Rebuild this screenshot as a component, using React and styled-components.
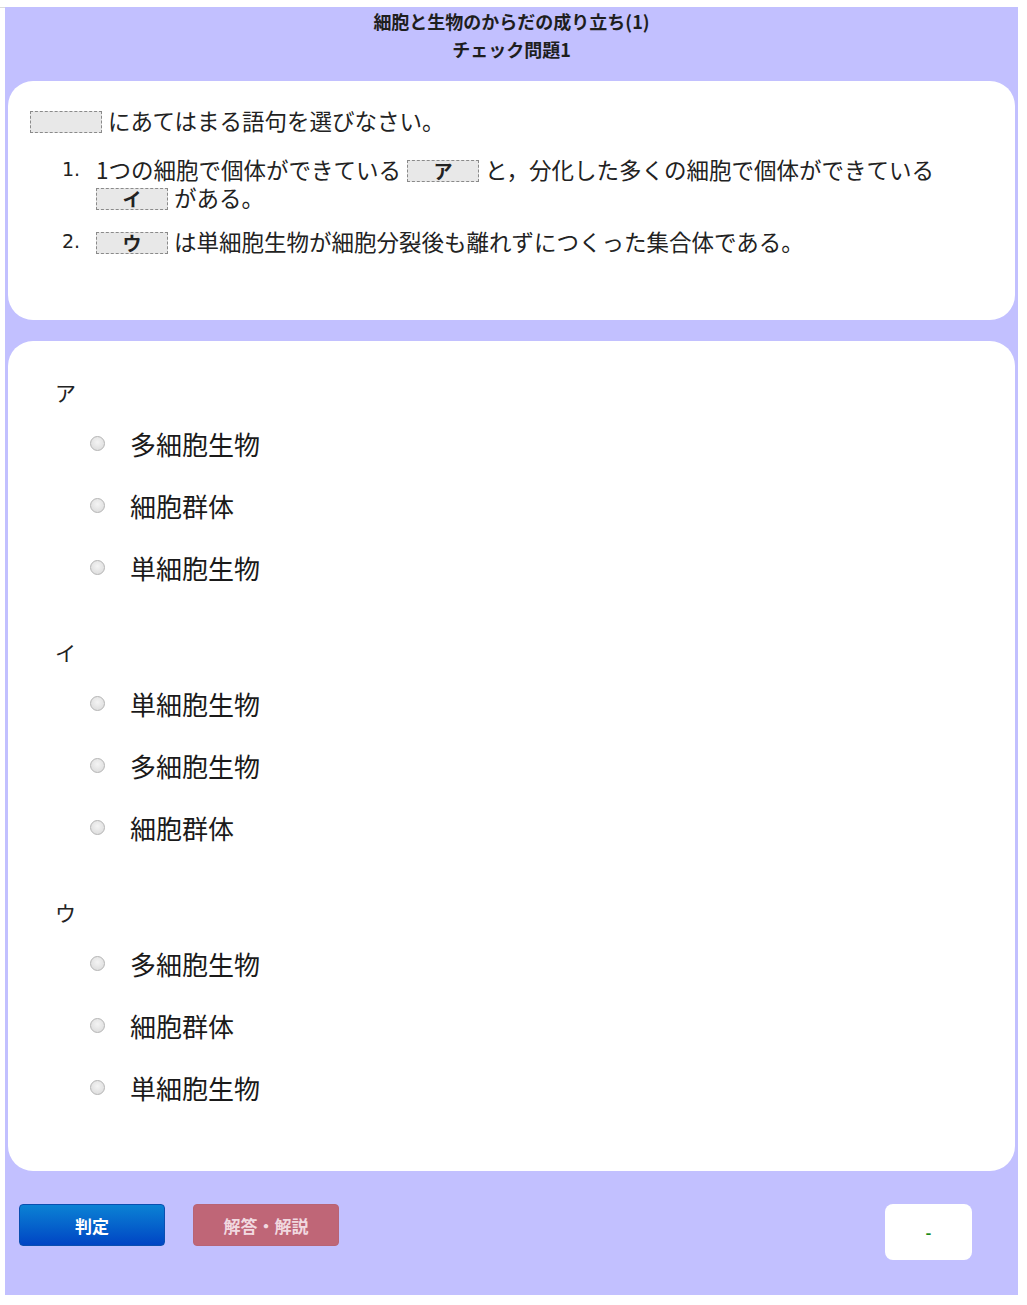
import React from 'react';
import styled, { createGlobalStyle } from 'styled-components';

const GlobalStyle = createGlobalStyle`
    html, body {
        margin: 0;
        padding: 0;
        background: #ffffff;
    }
    body {
        font-family: "Noto Sans CJK JP", "Noto Sans", sans-serif;
        color: #222222;
    }
`;

const Page = styled.div`
    width: 1018px;
    padding-top: 7px;
`;

const Frame = styled.div`
    border-top: 1px solid #dcdcdc;
`;

const Panel = styled.div`
    margin-left: 5px;
    width: 1013px;
    background: #c2c0ff;
    padding: 0 3px 35px 3px;
    box-sizing: border-box;
`;

const Header = styled.div`
    text-align: center;
    font-size: 18px;
    font-weight: bold;
    line-height: 28px;
    padding: 0 0 18px 0;
    margin-top: -1px;
    color: #1e1e1e;
`;

const Card = styled.div`
    background: #ffffff;
    border-radius: 25px;
    padding: ${(p) => p.$pad};
    margin-bottom: ${(p) => p.$mb || '0'};
`;

const Lead = styled.div`
    font-size: 22.5px;
    line-height: 30px;
    margin-top: 3px;
    margin-bottom: 20px;
`;

const Blank = styled.span`
    display: inline-block;
    box-sizing: border-box;
    width: 72px;
    height: 22px;
    vertical-align: middle;
    border: 1px dashed #8a8a8a;
    background: #e8e8e8;
    text-align: center;
    font-size: 19px;
    font-weight: bold;
    line-height: 20px;
    margin: -4px 6px 0 ${(p) => p.$ml || '6px'};
`;

const List = styled.ol`
    list-style: none;
    margin: 0;
    padding: 0 0 0 32px;
    display: flex;
    flex-direction: column;
    gap: 16px;
`;

const Item = styled.li`
    display: grid;
    grid-template-columns: 34px 1fr;
    font-size: 22.5px;
    line-height: 28px;
`;

const Num = styled.span`
    font-family: "DejaVu Sans", sans-serif;
    font-size: 19px;
`;

const Groups = styled.div`
    display: flex;
    flex-direction: column;
    gap: 39px;
`;

const Group = styled.div`
    display: flex;
    flex-direction: column;
`;

const Label = styled.div`
    font-size: 21px;
    line-height: 30px;
    padding-left: 25px;
    margin-bottom: 5px;
`;

const Option = styled.label`
    display: flex;
    align-items: center;
    height: 62px;
    padding-left: 60px;
    font-size: 26px;
    gap: 25px;
    color: #1a1a1a;
`;

const Radio = styled.input`
    appearance: none;
    margin: 0;
    width: 15px;
    height: 15px;
    border-radius: 50%;
    border: 1px solid #b4b4b4;
    background: radial-gradient(circle at 50% 40%, #f4f4f4 0%, #d8d8d8 100%);
    box-sizing: border-box;
`;

const Actions = styled.div`
    display: flex;
    align-items: flex-start;
    padding: 33px 43px 0 11px;
    gap: 28px;
`;

const Button = styled.button`
    width: 146px;
    height: 42px;
    border-radius: 4px;
    font-family: "Noto Sans CJK JP", sans-serif;
    font-size: 17px;
    font-weight: bold;
    cursor: pointer;
    border: 1px solid ${(p) => (p.$variant === 'judge' ? '#0a4fb0' : '#b86474')};
    background: ${(p) =>
        p.$variant === 'judge'
            ? 'linear-gradient(#0b82d4, #0045c4)'
            : '#bf6677'};
    color: ${(p) => (p.$variant === 'judge' ? '#ffffff' : '#f1d9e0')};
`;

const Score = styled.div`
    margin-left: auto;
    width: 87px;
    height: 56px;
    border-radius: 8px;
    background: #ffffff;
    display: flex;
    align-items: center;
    justify-content: center;
    color: #1a8a1a;
    font-size: 16px;
    font-weight: bold;
`;

const groups = [
    { label: 'ア', options: ['多細胞生物', '細胞群体', '単細胞生物'] },
    { label: 'イ', options: ['単細胞生物', '多細胞生物', '細胞群体'] },
    { label: 'ウ', options: ['多細胞生物', '細胞群体', '単細胞生物'] },
];

export default function App() {
    return (
        <>
            <GlobalStyle />
            <Page>
                <Frame>
                    <Panel>
                        <Header>
                            <div>細胞と生物のからだの成り立ち(1)</div>
                            <div>チェック問題1</div>
                        </Header>

                        <Card $pad="21px 25px 65px 22px" $mb="21px">
                            <Lead>
                                <Blank $ml="0" />にあてはまる語句を選びなさい。
                            </Lead>
                            <List>
                                <Item>
                                    <Num>1.</Num>
                                    <span>
                                        1つの細胞で個体ができている<Blank>ア</Blank>と，分化した多くの細胞で個体ができている
                                        <br />
                                        <Blank $ml="0">イ</Blank>がある。
                                    </span>
                                </Item>
                                <Item>
                                    <Num>2.</Num>
                                    <span>
                                        <Blank $ml="0">ウ</Blank>は単細胞生物が細胞分裂後も離れずにつくった集合体である。
                                    </span>
                                </Item>
                            </List>
                        </Card>

                        <Card $pad="36px 25px 53px 22px">
                            <Groups>
                                {groups.map((g) => (
                                    <Group key={g.label}>
                                        <Label>{g.label}</Label>
                                        {g.options.map((o) => (
                                            <Option key={o}>
                                                <Radio type="radio" name={g.label} />
                                                {o}
                                            </Option>
                                        ))}
                                    </Group>
                                ))}
                            </Groups>
                        </Card>

                        <Actions>
                            <Button $variant="judge">判定</Button>
                            <Button $variant="answer">解答・解説</Button>
                            <Score>-</Score>
                        </Actions>
                    </Panel>
                </Frame>
            </Page>
        </>
    );
}
